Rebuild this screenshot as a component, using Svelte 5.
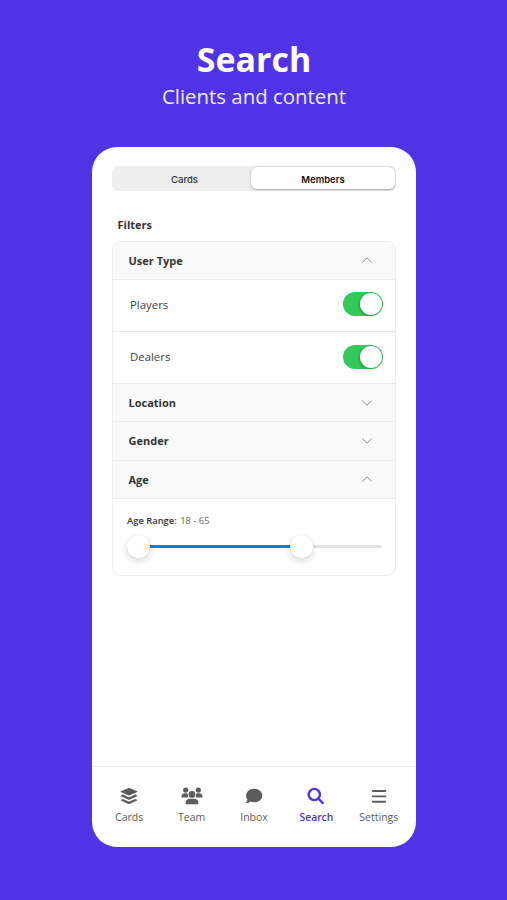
<script lang="ts">
    let activeTab = $state("Members");
    let activeNav = $state("Search");

    let userTypes = $state([
        { name: "Players", on: true },
        { name: "Dealers", on: true },
    ]);

    let open: Record<string, boolean> = $state({
        "User Type": true,
        Location: false,
        Gender: false,
        Age: true,
    });

    const tabs = ["Cards", "Members"];
    const sections = ["User Type", "Location", "Gender", "Age"];
    const navItems = ["Cards", "Team", "Inbox", "Search", "Settings"];

    const ageLimit = { min: 18, max: 88 };
    let age = $state({ from: 18, to: 65 });

    const pct = (v: number) =>
        ((v - ageLimit.min) / (ageLimit.max - ageLimit.min)) * 100;
</script>

<div class="page">
    <header>
        <h1>Search</h1>
        <p>Clients and content</p>
    </header>

    <div class="phone">
        <main>
            <div class="tabs">
                {#each tabs as tab}
                    <button
                        class:selected={activeTab === tab}
                        onclick={() => (activeTab = tab)}>{tab}</button
                    >
                {/each}
            </div>

            <h2>Filters</h2>

            <div class="filters">
                {#each sections as section}
                    <button
                        class="section-head"
                        onclick={() => (open[section] = !open[section])}
                    >
                        <span>{section}</span>
                        <svg
                            class="chevron"
                            class:up={open[section]}
                            viewBox="0 0 12 8"
                        >
                            <path d="M1.3 1.6 6 6.2l4.7-4.6" />
                        </svg>
                    </button>

                    {#if section === "User Type" && open[section]}
                        {#each userTypes as type}
                            <div class="option">
                                <span>{type.name}</span>
                                <button
                                    class="toggle"
                                    class:on={type.on}
                                    aria-label={type.name}
                                    onclick={() => (type.on = !type.on)}
                                >
                                    <i></i>
                                </button>
                            </div>
                        {/each}
                    {/if}

                    {#if section === "Age" && open[section]}
                        <div class="age">
                            <p>
                                <b>Age Range:</b>
                                {age.from} - {age.to}
                            </p>
                            <div class="slider">
                                <div class="track">
                                    <div
                                        class="fill"
                                        style="width: {pct(age.to)}%"
                                    ></div>
                                    <div
                                        class="knob"
                                        style="left: {pct(age.from)}%"
                                    ></div>
                                    <div
                                        class="knob"
                                        style="left: {pct(age.to)}%"
                                    ></div>
                                </div>
                            </div>
                        </div>
                    {/if}
                {/each}
            </div>
        </main>

        <nav>
            {#each navItems as item}
                <button
                    class:active={activeNav === item}
                    onclick={() => (activeNav = item)}
                >
                    {#if item === "Cards"}
                        <svg width="18" height="18" viewBox="0 0 18 18">
                            <path
                                d="M9.5.9 17 4.3q.7.4 0 .8L9.5 8.5q-.5.2-1 0L1 5.1q-.7-.4 0-.8L8.5.9q.5-.2 1 0z"
                            />
                            <path
                                d="M1 8.4 2.8 7.6l5.3 2.4q.9.3 1.8 0l5.3-2.4 1.8.8q.7.4 0 .8l-7.5 3.5q-.5.2-1 0L1 9.2q-.7-.4 0-.8z"
                            />
                            <path
                                d="M1 12.7l1.8-.8 5.3 2.4q.9.3 1.8 0l5.3-2.4 1.8.8q.7.4 0 .8l-7.5 3.5q-.5.2-1 0L1 13.5q-.7-.4 0-.8z"
                            />
                        </svg>
                    {:else if item === "Team"}
                        <svg width="22" height="18" viewBox="0 0 22 18">
                            <circle cx="4.7" cy="3.1" r="2.6" />
                            <circle cx="17.3" cy="3.1" r="2.6" />
                            <circle cx="11" cy="7.4" r="3.4" />
                            <path
                                d="M.5 10q0-3.7 3.3-3.7h1.6q.8 0 1.5.4-.3 1.8.5 3.7H1q-.5 0-.5-.4z"
                            />
                            <path
                                d="M21.5 10q0-3.7-3.3-3.7h-1.6q-.8 0-1.5.4.3 1.8-.5 3.7H21q.5 0 .5-.4z"
                            />
                            <path
                                d="M4.6 16.5q0-4.8 4.4-4.8h4q4.4 0 4.4 4.8 0 .7-.7.7H5.3q-.7 0-.7-.7z"
                            />
                        </svg>
                    {:else if item === "Inbox"}
                        <svg width="18" height="18" viewBox="0 0 18 18">
                            <path
                                d="M9.2 1.7c4.6 0 8.1 3 8.1 6.8s-3.5 6.8-8.1 6.8q-2 0-3.6-.7-2 1.5-4.4 1.5-.7-.1-.3-.7 1.2-1.2 1.500-3Q1.1 10.7 1.1 8.5c0-3.8 3.5-6.8 8.1-6.8z"
                            />
                        </svg>
                    {:else if item === "Search"}
                        <svg width="18" height="18" viewBox="0 0 18 18">
                            <circle class="line" cx="7.3" cy="7.5" r="5.6" />
                            <path class="line round" d="m11.6 11.8 4.2 4.2" />
                        </svg>
                    {:else}
                        <svg width="18" height="18" viewBox="0 0 18 18">
                            <path
                                class="bars"
                                d="M2.7 4h12.6M2.7 9.4h12.6M2.7 14.7h12.6"
                            />
                        </svg>
                    {/if}
                    <span>{item}</span>
                </button>
            {/each}
        </nav>
    </div>
</div>

<style>
    :global(body) {
        margin: 0;
    }
    .page {
        height: 900px;
        padding: 35px 0 0 1px;
        box-sizing: border-box;
        background: #4f33e5;
        font-family: "Open Sans", sans-serif;
        color: #333;
    }
    header {
        height: 112px;
        text-align: center;
        color: #fff;
    }
    h1 {
        margin: 0;
        font-size: 34px;
        line-height: 49px;
        font-weight: 700;
    }
    header p {
        margin: 0;
        font-size: 20.4px;
        line-height: 24px;
        color: #eeebff;
    }
    button {
        padding: 0;
        border: none;
        background: none;
        font-family: inherit;
        color: inherit;
        cursor: pointer;
    }

    .phone {
        display: flex;
        flex-direction: column;
        width: 324px;
        height: 700px;
        margin: 0 auto;
        background: #fff;
        border-radius: 25px;
    }
    main {
        flex: 1;
        padding: 19px 20px 0;
    }

    .tabs {
        display: flex;
        height: 25px;
        border-radius: 6px;
        background: #eee;
    }
    .tabs button {
        flex: 1;
        padding: 1px 0 0 7px;
        font-family: Inter, sans-serif;
        font-size: 9.5px;
        font-weight: 500;
        color: #333;
        border-radius: 6px;
    }
    .tabs .selected {
        flex: 0 0 144px;
        margin: 1px 1px 2px;
        padding: 2px 0 0;
        background: #fff;
        color: #111;
        font-weight: 600;
        box-shadow: 0 0.5px 2px rgba(0, 0, 0, 0.3);
    }

    h2 {
        margin: 24.6px 0 7px 5.5px;
        font-size: 11px;
        line-height: 18px;
        font-weight: 700;
    }

    .filters {
        border: 1px solid #eee;
        border-radius: 9px;
        overflow: hidden;
    }
    .section-head {
        display: flex;
        align-items: center;
        justify-content: space-between;
        width: 100%;
        height: 38.2px;
        padding: 0 22px 0 15.5px;
        box-sizing: border-box;
        background: #fafafa;
        border-bottom: 1px solid #ebebeb;
        font-size: 11px;
        font-weight: 700;
    }
    .chevron {
        width: 12px;
        height: 8px;
        fill: none;
        stroke: #888;
        stroke-width: 1;
    }
    .chevron.up {
        transform: rotate(180deg);
    }

    .option {
        display: flex;
        align-items: center;
        justify-content: space-between;
        height: 52.2px;
        padding: 0 12px 2px 17px;
        box-sizing: border-box;
        border-bottom: 1px solid #ebebeb;
        font-size: 11.4px;
        font-weight: 500;
        color: #444;
    }
    .toggle {
        display: flex;
        width: 40px;
        height: 24px;
        padding: 1px;
        box-sizing: border-box;
        border-radius: 12px;
        background: #ddd;
    }
    .toggle.on {
        justify-content: flex-end;
        background: #34c759;
    }
    .toggle i {
        width: 22px;
        height: 22px;
        border-radius: 50%;
        background: #fff;
        box-shadow: -1px 1px 3px rgba(0, 0, 0, 0.25);
    }

    .age {
        height: 76px;
        padding: 13px 13px 0 14px;
        box-sizing: border-box;
    }
    .age p {
        margin: 0;
        font-size: 9.4px;
        line-height: 18px;
        color: #666;
    }
    .age b {
        margin-right: 1px;
        font-weight: 600;
        color: #333;
    }
    .slider {
        padding: 15px 0 0 11px;
    }
    .track {
        position: relative;
        height: 3px;
        border-radius: 2px;
        background: #e3e3e3;
    }
    .fill {
        height: 3px;
        background: #0a7cf0;
    }
    .knob {
        position: absolute;
        top: -10px;
        width: 23px;
        height: 23px;
        margin-left: -11.5px;
        border-radius: 50%;
        background: #fff;
        box-shadow:
            0 0 1px rgba(0, 0, 0, 0.15),
            0 3px 7px rgba(0, 0, 0, 0.15);
    }

    nav {
        display: flex;
        height: 81px;
        padding: 0 6px;
        box-sizing: border-box;
        border-top: 1px solid #ececec;
    }
    nav button {
        flex: 1;
        display: flex;
        flex-direction: column;
        align-items: center;
        padding-top: 20px;
        color: #5c5c5c;
        font-size: 10.5px;
        font-weight: 500;
    }
    nav svg {
        fill: currentColor;
    }
    nav span {
        margin-top: 4px;
        line-height: 17px;
    }
    nav .active {
        color: #4f33e5;
        font-size: 10.3px;
        font-weight: 600;
    }
    .line {
        fill: none;
        stroke: currentColor;
        stroke-width: 2.4;
    }
    .round {
        stroke-linecap: round;
    }
    .bars {
        stroke: currentColor;
        stroke-width: 1.9;
        stroke-linecap: round;
    }
</style>
